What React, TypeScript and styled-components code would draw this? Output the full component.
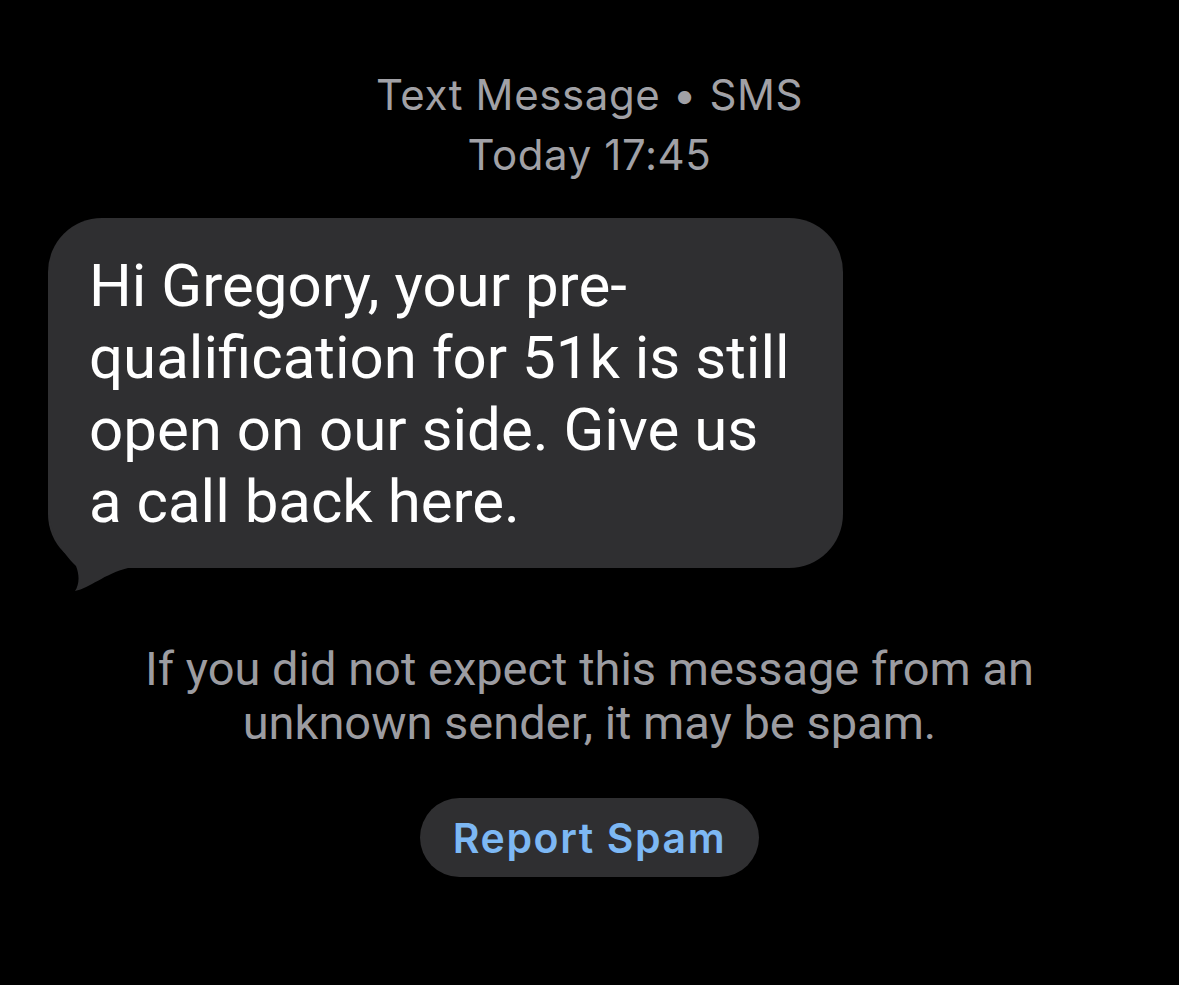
import React from 'react';
import styled, { createGlobalStyle } from 'styled-components';

const GlobalStyle = createGlobalStyle`
  html, body {
    margin: 0;
    padding: 0;
    background: #000;
  }
  body {
    font-family: Inter, "Noto Sans", sans-serif;
    -webkit-font-smoothing: antialiased;
  }
`;

const Screen = styled.div`
  width: 1179px;
  min-height: 985px;
  background: #000;
  display: flex;
  flex-direction: column;
  align-items: center;
  padding-top: 65px;
  box-sizing: border-box;
`;

const ThreadHeader = styled.div`
  font-family: Inter, sans-serif;
  font-size: 42px;
  line-height: 60px;
  color: #a1a1a6;
  text-align: center;
  letter-spacing: 0.6px;
`;

const Row = styled.div`
  width: 100%;
  display: flex;
  justify-content: flex-start;
  padding-left: 48px;
  box-sizing: border-box;
  margin-top: 33px;
`;

const Bubble = styled.div`
  position: relative;
  width: 795px;
  box-sizing: border-box;
  background: #2f2f31;
  border-radius: 54px;
  padding: 32px 20px 30px 41px;
  color: #fff;
  font-family: Roboto, "Noto Sans", sans-serif;
  font-size: 60px;
  line-height: 72px;
`;

const Tail = styled.svg`
  position: absolute;
  left: 0;
  bottom: -23px;
  width: 80px;
  height: 91px;
  z-index: 0;
`;

const Line = styled.span`
  position: relative;
  z-index: 1;
  display: block;
  white-space: nowrap;
`;

const Notice = styled.p`
  margin: 74px 0 0;
  font-family: Roboto, sans-serif;
  font-size: 47px;
  line-height: 54px;
  color: #9c9ca1;
  text-align: center;
`;

const SpamButton = styled.button`
  margin-top: 48px;
  height: 79px;
  padding: 0 33px;
  border: none;
  border-radius: 40px;
  background: #2f2f31;
  color: #7db8f4;
  font-family: Inter, sans-serif;
  font-weight: 600;
  font-size: 41px;
  letter-spacing: 1.6px;
  cursor: pointer;
`;

const messageLines = [
  'Hi Gregory, your pre-',
  'qualification for 51k is still',
  'open on our side. Give us',
  'a call back here.',
];

export default function App() {
  return (
    <>
      <GlobalStyle />
      <Screen>
        <ThreadHeader>
          Text Message • SMS
          <br />
          Today 17:45
        </ThreadHeader>
        <Row>
          <Bubble>
            <Tail viewBox="0 0 80 91">
              <path
                d="M0 0 C0 30 12 50 28 66 C32 76 31 85 27 91 C42 88 56 74 80 68 L80 0 Z"
                fill="#2f2f31"
              />
            </Tail>
            {messageLines.map(line => (
              <Line key={line}>{line}</Line>
            ))}
          </Bubble>
        </Row>
        <Notice>
          If you did not expect this message from an
          <br />
          unknown sender, it may be spam.
        </Notice>
        <SpamButton>Report Spam</SpamButton>
      </Screen>
    </>
  );
}
